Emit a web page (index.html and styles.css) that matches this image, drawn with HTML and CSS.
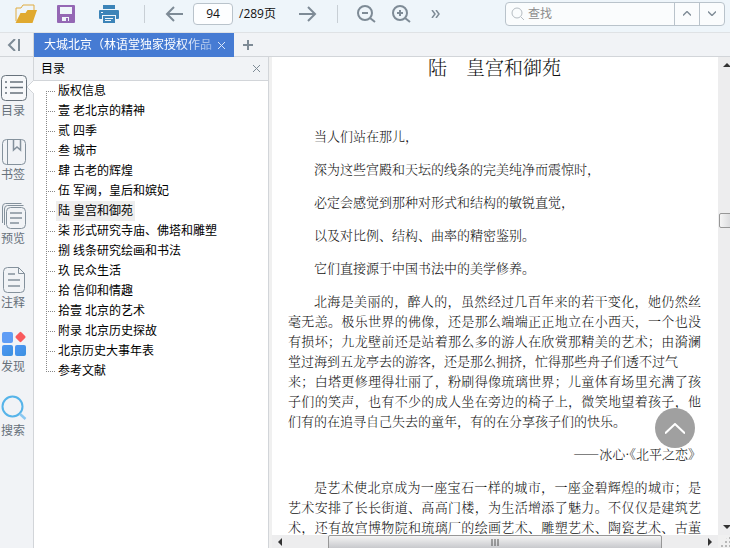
FILE: index.html
```html
<!DOCTYPE html>
<html lang="zh-CN">
<head>
<meta charset="utf-8">
<meta name="viewport" content="width=device-width, initial-scale=1">
<title>大城北京</title>
<link rel="stylesheet" href="styles.css">
</head>
<body>
<div class="app">
  <header class="toolbar">
    <button class="tool open" aria-label="打开">
      <svg width="22" height="20" viewBox="0 0 22 20"><path d="M1 17V4h5l2-3h11v5" fill="none" stroke="#e0ac40"/><path d="M.5 19 5.500 9h5l2-3H22l-4.500 13z" fill="#e0a92f"/></svg>
    </button>
    <button class="tool save" aria-label="保存">
      <svg width="18" height="18" viewBox="0 0 18 18"><path fill="#9467b4" fill-rule="evenodd" d="M1 0h16a1 1 0 0 1 1 1v16a1 1 0 0 1-1 1H1a1 1 0 0 1-1-1V1a1 1 0 0 1 1-1zM3 2v7h12V2zM5 12v4h4v-3h2v3h1v-4z"/></svg>
    </button>
    <button class="tool print" aria-label="打印">
      <svg width="20" height="18" viewBox="0 0 20 18"><path fill="#3c84b8" d="M4 0h12v4H4zM1 5h18a1 1 0 0 1 1 1v7a1 1 0 0 1-1 1h-2v-4H3v4H1a1 1 0 0 1-1-1V6a1 1 0 0 1 1-1z"/><path fill="#f3f8fb" d="M2 7h2v1H2z"/><path fill="#3c84b8" fill-rule="evenodd" d="M4 11h12v7H4zM6 13v1h8v-1zM6 15v1h6v-1z"/></svg>
    </button>
    <span class="divider"></span>
    <button class="tool back" aria-label="上一页">
      <svg width="18" height="16" viewBox="0 0 18 16"><path d="M18 8H2M9 1 2 8l7 7" fill="none" stroke="#7e8b96" stroke-width="2"/></svg>
    </button>
    <div class="pager"><input type="text" value="94" aria-label="页码"><span>/289页</span></div>
    <button class="tool forward" aria-label="下一页">
      <svg width="18" height="16" viewBox="0 0 18 16"><path d="M0 8h16M9 1l7 7-7 7" fill="none" stroke="#7e8b96" stroke-width="2"/></svg>
    </button>
    <span class="divider"></span>
    <button class="tool zoom-out" aria-label="缩小">
      <svg width="19" height="18" viewBox="0 0 19 18"><circle cx="8" cy="8" r="7" fill="none" stroke="#7e8b96" stroke-width="2"/><path d="M5 8h6M13 13l5 4" fill="none" stroke="#7e8b96" stroke-width="2"/></svg>
    </button>
    <button class="tool zoom-in" aria-label="放大">
      <svg width="19" height="18" viewBox="0 0 19 18"><circle cx="8" cy="8" r="7" fill="none" stroke="#7e8b96" stroke-width="2"/><path d="M5 8h6M8 5v6M13 13l5 4" fill="none" stroke="#7e8b96" stroke-width="2"/></svg>
    </button>
    <button class="tool more" aria-label="更多">
      <svg width="10" height="8" viewBox="0 0 10 8"><path d="m1 0 3 4-3 4M5 0l3 4-3 4" fill="none" stroke="#7e8b96" stroke-width="1.500"/></svg>
    </button>
    <div class="search">
      <svg width="14" height="14" viewBox="0 0 14 14"><circle cx="6" cy="6" r="5" fill="none" stroke="#b5bcc2"/><path d="m10 10 3 3" stroke="#b5bcc2"/></svg>
      <input type="text" placeholder="查找" aria-label="查找">
      <button aria-label="查找上一个"><svg width="8" height="5" viewBox="0 0 8 5"><path d="m0 4.500 4-4 4 4" fill="none" stroke="#7e8b96" stroke-width="1.400"/></svg></button>
      <button aria-label="查找下一个"><svg width="8" height="5" viewBox="0 0 8 5"><path d="m0 .5 4 4 4-4" fill="none" stroke="#7e8b96" stroke-width="1.400"/></svg></button>
    </div>
  </header>

  <div class="tabs">
    <button class="collapse" aria-label="收起">
      <svg width="13" height="12" viewBox="0 0 13 12"><path d="M8 0 2 6l6 6M12 0v12" fill="none" stroke="#7e8b96" stroke-width="2"/></svg>
    </button>
    <div class="tab">
      <span class="tab-title">大城北京（林语堂独家授权作品</span>
      <button aria-label="关闭标签"><svg width="7" height="7" viewBox="0 0 7 7"><path d="m0 0 7 7M7 0 0 7" stroke="#dce8fa"/></svg></button>
    </div>
    <button class="add" aria-label="新建标签"><svg width="10" height="10" viewBox="0 0 10 10"><path d="M0 5h10M5 0v10" stroke="#7e8b96" stroke-width="2"/></svg></button>
  </div>

  <div class="workspace">
    <nav class="rail">
      <button class="active">
        <svg width="27" height="27" viewBox="0 0 27 27" fill="none" stroke="#68727c"><rect x="1.500" y=".5" width="25" height="25" rx="4" fill="#f7f8fa"/><path stroke-width="1.700" d="M5 7h2M5 12.500h2M5 18h2M10 7h13M10 12.500h13M10 18h13"/></svg>
        <span>目录</span>
      </button>
      <button>
        <svg width="27" height="27" viewBox="0 0 27 27" fill="none" stroke="#84919c"><rect x="2.500" y=".5" width="23" height="25" rx="4"/><path d="M7.500 1v25"/><path d="M13.500 1v10l3.500-3 3.500 3V1" stroke-width="1.500"/></svg>
        <span>书签</span>
      </button>
      <button>
        <svg width="27" height="27" viewBox="0 0 27 27" fill="none" stroke="#84919c"><path d="M2.500 20V4q0-3.500 3-3.500h16M4.500 22V6q0-3.500 3-3.500h16"/><rect x="6.500" y="4.500" width="19" height="21" rx="4"/><path stroke-width="1.500" d="M10 10h12M10 15h12M10 20h9"/></svg>
        <span>预览</span>
      </button>
      <button>
        <svg width="27" height="27" viewBox="0 0 27 27" fill="none" stroke="#84919c"><path d="M18.500.5H7.500q-4 0-4 4v17q0 4 4 4h13q4 0 4-4V6.500zM18.500.5v6h6"/><path stroke-width="1.500" d="M8 7h7M8 13h12M8 19h12"/></svg>
        <span>注释</span>
      </button>
      <button>
        <svg width="27" height="27" viewBox="0 0 27 27"><defs><linearGradient id="tile" x2="1" y2="1"><stop stop-color="#4e96f5"/><stop offset="1" stop-color="#3c91df"/></linearGradient></defs><rect x="2" y="1" width="11" height="11" rx="2" fill="#609df5"/><rect x="2" y="14" width="11" height="11" rx="2" fill="url(#tile)"/><rect x="15" y="14" width="11" height="11" rx="2" fill="url(#tile)"/><rect x="16.500" y="2" width="8" height="8" rx="1.500" fill="#f95a5d" transform="rotate(45 20.500 6)"/></svg>
        <span>发现</span>
      </button>
      <button>
        <svg width="27" height="27" viewBox="0 0 27 27" fill="none"><circle cx="12.500" cy="11.500" r="10" stroke="#56b4e9" stroke-width="2"/><path d="m20 19 5.500 5" stroke="#8ac8f1" stroke-width="2.500"/></svg>
        <span>搜索</span>
      </button>
    </nav>

    <aside class="outline">
      <div class="outline-head">
        <svg class="pointer" width="7" height="14" viewBox="0 0 7 14"><path d="M7 0 0 7l7 7" fill="#fff" stroke="#d2d5d9"/></svg>
        <h2>目录</h2>
        <button aria-label="关闭目录"><svg width="7" height="7" viewBox="0 0 7 7"><path d="m0 0 7 7M7 0 0 7" stroke="#7e8b96"/></svg></button>
      </div>
      <ul>
        <li><a href="#">版权信息</a></li>
        <li><a href="#">壹 老北京的精神</a></li>
        <li><a href="#">贰 四季</a></li>
        <li><a href="#">叁 城市</a></li>
        <li><a href="#">肆 古老的辉煌</a></li>
        <li><a href="#">伍 军阀，皇后和嫔妃</a></li>
        <li><a href="#" class="current">陆 皇宫和御苑</a></li>
        <li><a href="#">柒 形式研究寺庙、佛塔和雕塑</a></li>
        <li><a href="#">捌 线条研究绘画和书法</a></li>
        <li><a href="#">玖 民众生活</a></li>
        <li><a href="#">拾 信仰和情趣</a></li>
        <li><a href="#">拾壹 北京的艺术</a></li>
        <li><a href="#">附录 北京历史探故</a></li>
        <li><a href="#">北京历史大事年表</a></li>
        <li><a href="#">参考文献</a></li>
      </ul>
    </aside>

    <main class="viewer">
      <article class="page">
        <h1>陆　皇宫和御苑</h1>
        <p>当人们站在那儿，</p>
        <p>深为这些宫殿和天坛的线条的完美纯净而震惊时，</p>
        <p>必定会感觉到那种对形式和结构的敏锐直觉，</p>
        <p>以及对比例、结构、曲率的精密鉴别。</p>
        <p>它们直接源于中国书法中的美学修养。</p>
        <p>北海是美丽的，醉人的，虽然经过几百年来的若干变化，她仍然丝毫无恙。极乐世界的佛像，还是那么端端正正地立在小西天，一个也没有损坏；九龙壁前还是站着那么多的游人在欣赏那精美的艺术；由漪澜堂过海到五龙亭去的游客，还是那么拥挤，忙得那些舟子们透不过气<br>来；白塔更修理得壮丽了，粉刷得像琉璃世界；儿童体育场里充满了孩子们的笑声，也有不少的成人坐在旁边的椅子上，微笑地望着孩子，他们有的在追寻自己失去的童年，有的在分享孩子们的快乐。</p>
        <p class="source">——冰心·《北平之恋》</p>
        <p class="continued">是艺术使北京成为一座宝石一样的城市，一座金碧辉煌的城市；是艺术安排了长长街道、高高门楼，为生活增添了魅力。不仅仅是建筑艺术，还有故宫博物院和琉璃厂的绘画艺术、雕塑艺术、陶瓷艺术、古董</p>
      </article>
      <button class="to-top" aria-label="回到顶部"><svg width="20" height="11" viewBox="0 0 20 11"><path d="m0 10.500 10-9.500 10 9.500" fill="none" stroke="#fff" stroke-width="2"/></svg></button>
      <div class="vbar">
        <svg width="17" height="17" viewBox="0 0 17 17"><path d="m5 10 4-4 4 4z" fill="#333"/></svg>
        <span class="thumb"></span>
        <svg width="17" height="17" viewBox="0 0 17 17"><path d="m5 7 4 4 4-4z" fill="#333"/></svg>
      </div>
      <div class="hbar">
        <svg width="16" height="13" viewBox="0 0 16 13"><path d="m10 3-4 4 4 4z" fill="#333"/></svg>
        <div class="track"><span class="thumb"><svg width="8" height="7" viewBox="0 0 8 7"><path d="M1 0v7M4 0v7M7 0v7" stroke="#555"/></svg></span></div>
        <svg width="16" height="13" viewBox="0 0 16 13"><path d="m6 3 4 4-4 4z" fill="#333"/></svg>
      </div>
      <div class="corner"></div>
    </main>
  </div>
</div>
</body>
</html>
```
FILE: styles.css
```css
* { box-sizing: border-box; }

body {
  margin: 0;
  font: 12px/20px "Open Sans", "Noto Sans CJK SC", sans-serif;
  color: #111;
}

button {
  display: flex;
  align-items: center;
  justify-content: center;
  flex: none;
  margin: 0;
  padding: 0;
  border: 0;
  background: none;
  font: inherit;
  color: inherit;
}

input { font: inherit; color: inherit; }
svg { display: block; flex: none; }

.app {
  display: flex;
  flex-direction: column;
  height: 100vh;
  overflow: hidden;
}

/* Toolbar */
.toolbar {
  display: flex;
  align-items: center;
  flex: none;
  height: 33px;
  padding: 0 5px 5px 15px;
  border-bottom: 1px solid #dfe2e5;
  background: #eef5fa;
}
.save { margin-left: 20px; }
.print { margin-left: 24px; }
.divider {
  flex: none;
  width: 1px;
  height: 18px;
  margin-left: 25px;
  background: #c8cfd5;
}
.back { margin-left: 20px; }
.pager { display: flex; align-items: center; gap: 6px; margin-left: 10px; }
.pager input {
  width: 40px;
  height: 22px;
  padding: 0;
  border: 1px solid #b9c3cb;
  border-radius: 4px;
  background: #fdfeff;
  text-align: center;
}
.forward { margin-left: 23px; }
.forward + .divider { margin-left: 20px; }
.zoom-out { margin-left: 19px; }
.zoom-in { margin-left: 16px; }
.more { margin-left: 20px; }
.search {
  display: flex;
  align-items: center;
  width: 220px;
  height: 24px;
  margin-left: auto;
  padding-left: 5px;
  border: 1px solid #b9c3cb;
  border-radius: 4px;
  background: #fafcfd;
}
.search input {
  flex: 1;
  min-width: 0;
  padding: 0 3px;
  border: 0;
  outline: 0;
  background: none;
}
.search input::placeholder { color: #8c8c8c; }
.search button {
  width: 25px;
  height: 22px;
  border-left: 1px solid #b9c3cb;
}

/* Document tabs */
.tabs {
  display: flex;
  flex: none;
  height: 24px;
  border-bottom: 1px solid #d2d5d9;
  background: #f1f3f6;
}
.collapse { width: 34px; padding-right: 6px; border-right: 1px solid #d2d5d9; }
.tab {
  display: flex;
  align-items: center;
  width: 200px;
  height: 24px;
  padding: 0 9px 0 10px;
  background: #467bd3;
  color: #fff;
}
.tab-title {
  flex: 1;
  overflow: hidden;
  white-space: nowrap;
  mask-image: linear-gradient(to right, #000 80%, rgba(0, 0, 0, 0.4));
}
.tab button { margin-left: 5px; }
.add { width: 28px; }

/* Main area */
.workspace { display: flex; flex: 1; min-height: 0; }

.rail {
  flex: none;
  width: 34px;
  padding-top: 18px;
  border-right: 1px solid #d2d5d9;
  background: #f1f3f6;
  color: #66707a;
}
.rail button {
  flex-direction: column;
  align-items: flex-start;
  justify-content: flex-start;
  height: 64px;
}
.rail span { padding-left: 1px; line-height: 18px; }

.outline {
  flex: none;
  width: 235px;
  border-right: 1px solid #d2d5d9;
  background: #fff;
  color: #000;
}
.outline-head {
  position: relative;
  display: flex;
  align-items: center;
  justify-content: space-between;
  height: 24px;
  padding: 0 8px 0 7px;
  border-bottom: 1px solid #d2d5d9;
  background: #f1f3f6;
}
.outline-head h2 { margin: 0; font-size: 12px; font-weight: 400; }
.pointer { position: absolute; left: -7px; bottom: -14px; }
.outline ul { margin: 0; padding: 0 0 0 12px; list-style: none; }
.outline li {
  display: flex;
  align-items: center;
  height: 20px;
  background: repeating-linear-gradient(to bottom, #888 0 1px, #fff 1px 2px) 0 0 / 1px 100% no-repeat;
}
.outline li:first-child { background-position: 0 10px; }
.outline li:last-child { background-size: 1px 10px; }
.outline li::before {
  content: "";
  width: 10px;
  height: 1px;
  background: repeating-linear-gradient(to right, #888 0 1px, #fff 1px 2px);
}
.outline a {
  padding: 0 2px;
  color: inherit;
  text-decoration: none;
  white-space: nowrap;
}
.outline .current { background: #eee; }

/* Page viewer */
.viewer {
  position: relative;
  display: grid;
  grid-template: minmax(0, 1fr) 13px / minmax(0, 1fr) 12px;
  flex: 1;
  min-width: 0;
  padding-left: 3px;
  background: #f0f0f0;
}
.page {
  overflow: hidden;
  padding: 0 17px 0 16px;
  background: #fff;
  color: #111;
  font-family: "Noto Serif CJK SC", "Noto Sans CJK SC", serif;
  font-size: 13px;
  font-weight: 300;
}
.page h1 {
  margin: 0 0 49px;
  font-size: 19px;
  font-weight: 300;
  line-height: 20px;
  text-align: center;
}
.page p {
  margin: 0 0 13px;
  text-align: justify;
  text-indent: 2em;
}
.page .source { text-align: right; }
.page .continued { text-align-last: justify; }

.to-top {
  position: absolute;
  right: 35px;
  bottom: 100px;
  width: 40px;
  height: 40px;
  border-radius: 50%;
  background: #a0a0a0;
}

.vbar {
  display: flex;
  flex-direction: column;
  overflow: hidden;
  background: #ededee;
}
.vbar .thumb {
  width: 17px;
  height: 15px;
  margin: 139px 0 auto 1px;
  border: 1px solid #979797;
  border-radius: 2px;
  background: linear-gradient(to right, #f5f5f5, #d0d1d4);
}
.hbar { display: flex; overflow: hidden; background: #ededee; }
.hbar .track { flex: 1; padding: 0 9%; }
.hbar .thumb {
  display: flex;
  align-items: center;
  justify-content: center;
  height: 15px;
  border: 1px solid #979797;
  border-radius: 2px;
  background: linear-gradient(to bottom, #f5f5f5, #c4c5c9);
}
.corner {
  background: radial-gradient(circle, #b8b8b8 1px, transparent 1px) 2px 1px / 4px 4px;
  clip-path: polygon(100% 0, 100% 100%, 0 100%);
}
```
